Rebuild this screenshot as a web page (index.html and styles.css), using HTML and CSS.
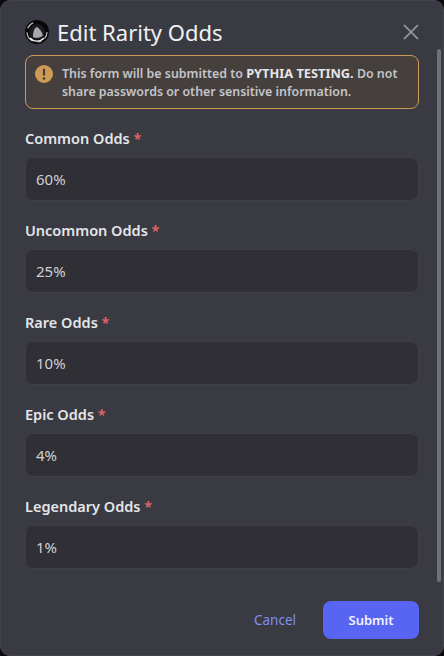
FILE: index.html
```html
<!DOCTYPE html>
<html lang="en">

<head>
    <meta charset="UTF-8">
    <meta name="viewport" content="width=device-width, initial-scale=1.0">
    <title>Edit Rarity Odds</title>
    <link rel="stylesheet" href="styles.css">
</head>

<body>
    <div class="modal">
        <div class="header">
            <svg class="logo" viewBox="0 0 24 24" width="24" height="24">
                <circle cx="12" cy="12" r="12" fill="#08080a" />
                <circle cx="12" cy="12" r="10" fill="none" stroke="#c9c9cc" stroke-width="1.100" stroke-dasharray="7 4 4 5 11 4 8 20" />
                <path d="M5 18 A9.500 9.500 0 0 0 19 18" fill="none" stroke="#f2f2f2" stroke-width="1.300" />
                <circle cx="12" cy="12" r="7.800" fill="#1d1d20" />
                <path d="M8 17 C8 12 9 8 12 7 C14 8 17 12 18 15.500 C15 18 11 18.500 8 17 Z" fill="#a9a9ad" />
            </svg>
            <div class="title">Edit Rarity Odds</div>
            <svg class="close" viewBox="0 0 16 16" width="16" height="16">
                <path d="M1 1 L15 15 M15 1 L1 15" stroke="#9a9ca4" stroke-width="1.700" fill="none" />
            </svg>
        </div>

        <div class="notice">
            <svg class="notice-icon" viewBox="0 0 20 20" width="18" height="18">
                <circle cx="10" cy="10" r="10" fill="#cf9a55" />
                <rect x="8.800" y="4" width="2.400" height="8" rx="1.200" fill="#45403d" />
                <circle cx="10" cy="15" r="1.500" fill="#45403d" />
            </svg>
            <div class="notice-text">This form will be submitted to <b>PYTHIA TESTING.</b> Do not share passwords or other sensitive information.</div>
        </div>

        <div class="fields">
            <div class="field">
                <div class="label">Common Odds <span class="req">*</span></div>
                <div class="input">60%</div>
            </div>
            <div class="field">
                <div class="label">Uncommon Odds <span class="req">*</span></div>
                <div class="input">25%</div>
            </div>
            <div class="field">
                <div class="label">Rare Odds <span class="req">*</span></div>
                <div class="input">10%</div>
            </div>
            <div class="field">
                <div class="label">Epic Odds <span class="req">*</span></div>
                <div class="input">4%</div>
            </div>
            <div class="field">
                <div class="label">Legendary Odds <span class="req">*</span></div>
                <div class="input">1%</div>
            </div>
        </div>

        <div class="footer">
            <div class="cancel">Cancel</div>
            <div class="submit">Submit</div>
        </div>

        <div class="scroll-thumb"></div>
    </div>
</body>

</html>
```

FILE: styles.css
```css
* {
    box-sizing: border-box;
}

html,
body {
    margin: 0;
    height: 100%;
    background-color: #0c0c0e;
}

body {
    font-family: 'Noto Sans', 'Liberation Sans', sans-serif;
    overflow: hidden;
}

.modal {
    position: relative;
    width: 444px;
    height: 656px;
    padding: 0 24px 0 24px;
    background-color: #393a42;
    border: 1px solid #44454c;
    border-radius: 10px;
    display: flex;
    flex-direction: column;
}

.header {
    height: 54px;
    display: flex;
    align-items: center;
    gap: 8px;
    padding-top: 8px;
}

.title {
    flex: 1;
    font-size: 22px;
    color: #f0f1f3;
}

.notice {
    height: 54px;
    padding: 1px 12px 0 9px;
    display: flex;
    align-items: center;
    gap: 9px;
    background-color: #45403d;
    border: 1px solid #cf9a55;
    border-radius: 8px;
}

.notice-icon {
    flex: none;
    align-self: flex-start;
    margin-top: 8px;
}

.notice-text {
    font-size: 12.400px;
    line-height: 18px;
    font-weight: 600;
    color: #c4c5c9;
}

.notice-text b {
    font-size: 12.800px;
    font-weight: 700;
    color: #e4e5e8;
}

.fields {
    margin-top: 20px;
    display: flex;
    flex-direction: column;
    gap: 20px;
}

.field {
    height: 72px;
}

.label {
    height: 28px;
    font-size: 14.500px;
    line-height: 18px;
    font-weight: 600;
    color: #e4e5e8;
}

.req {
    color: #e5656a;
}

.input {
    height: 44px;
    padding: 0 12px 0 10px;
    display: flex;
    align-items: center;
    font-size: 15px;
    color: #cfd0d4;
    background-color: #2f2f35;
    border: 1px solid #3f4047;
    border-radius: 8px;
}

.footer {
    margin-top: 32px;
    display: flex;
    justify-content: flex-end;
    align-items: center;
}

.cancel {
    font-size: 13.500px;
    color: #7f8ff0;
    margin-right: 27px;
}

.submit {
    width: 96px;
    height: 38px;
    display: flex;
    align-items: center;
    justify-content: center;
    font-size: 13px;
    font-weight: 600;
    color: #f3f4ff;
    background-color: #5865f2;
    border-radius: 8px;
}

.scroll-thumb {
    position: absolute;
    top: 48px;
    right: 2px;
    width: 4px;
    height: 533px;
    border-radius: 2px;
    background-color: #70717a;
}
```
